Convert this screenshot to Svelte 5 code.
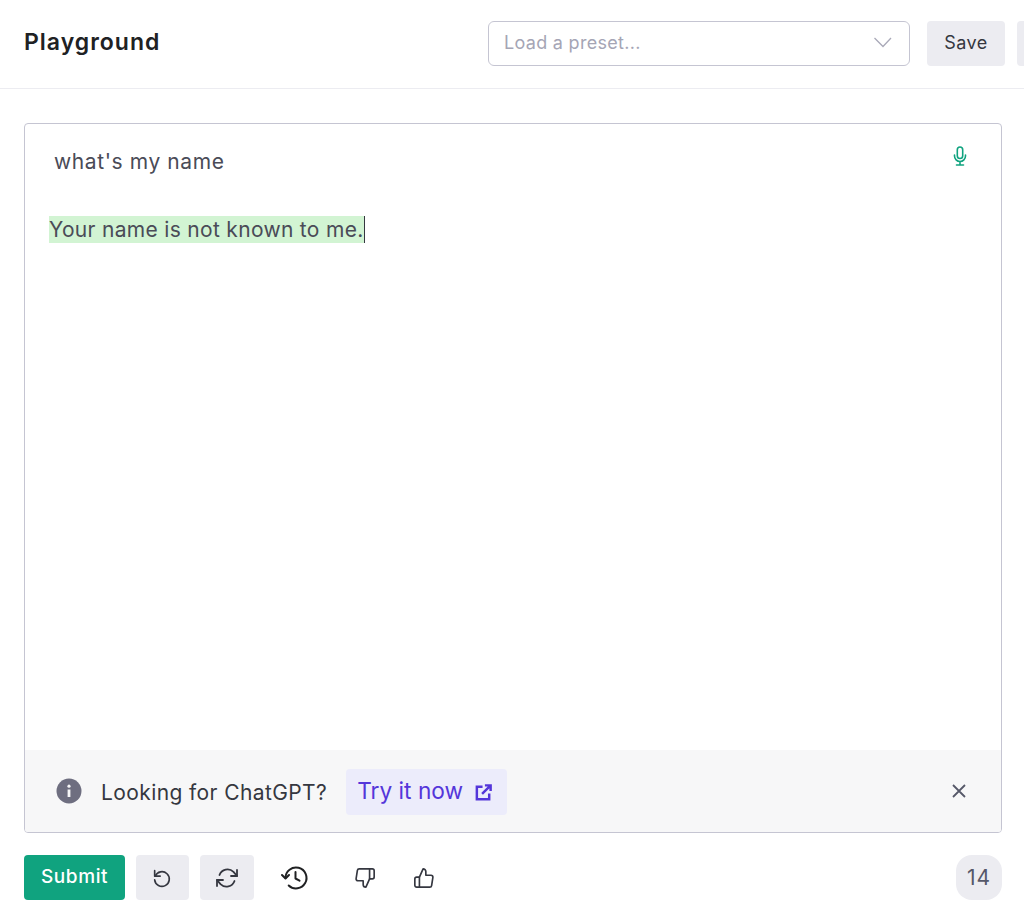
<script>
  let prompt = "what's my name";
  let answer = 'Your name is not known to me.';
  let tokens = 14;
</script>

<div class="page">
  <header class="header">
    <h1>Playground</h1>
    <div class="actions">
      <div class="preset">
        <span>Load a preset...</span>
        <svg width="20" height="20" viewBox="0 0 20 20" fill="none" stroke="#a9a9b8" stroke-width="1.3"><path d="M1.5 6l8.500 8.500L18 6" /></svg>
      </div>
      <button class="btn save">Save</button>
      <button class="btn extra" aria-label="More"></button>
    </div>
  </header>

  <main class="main">
    <section class="editor">
      <div class="text">
        <p class="prompt">{prompt}</p>
        <p class="answer"><mark>{answer}</mark><span class="caret"></span></p>
        <svg class="mic" width="24" height="24" viewBox="0 0 24 24" fill="none" stroke="#10a37f" stroke-width="1.6" stroke-linecap="round"><rect x="9.300" y="3" width="5.400" height="11.500" rx="2.700" /><path d="M6.500 11v1a5.500 5.500 0 0 0 11 0v-1M12 17.500V21M8.500 21h7" /></svg>
      </div>
      <div class="banner">
        <svg class="info" width="26" height="26" viewBox="0 0 26 26"><circle cx="13" cy="13" r="12.500" fill="#6e6e80" /><circle cx="13" cy="8.200" r="1.600" fill="#f7f7f8" /><rect x="11.600" y="11.500" width="2.800" height="7.500" fill="#f7f7f8" /></svg>
        <span class="looking">Looking for ChatGPT?</span>
        <a class="try" href="#try">
          Try it now
          <svg width="19" height="19" viewBox="0 0 20 20" fill="none" stroke="#5436da" stroke-width="2.600"><path d="M9 4H3v13h13v-6M8.500 11.500L17 3M11.500 2.500h6v6" /></svg>
        </a>
        <svg class="close" width="16" height="16" viewBox="0 0 16 16" fill="none" stroke="#565869" stroke-width="1.800"><path d="M2 2l12 12M14 2L2 14" /></svg>
      </div>
    </section>

    <footer class="toolbar">
      <button class="btn submit">Submit</button>
      <button class="btn icon undo" aria-label="Undo">
        <svg width="22" height="22" viewBox="0 0 24 24" fill="none" stroke="#353740" stroke-width="1.800" stroke-linecap="round" stroke-linejoin="round"><path d="M4 4v6h6" /><path d="M4.600 10A8 8 0 1 1 4 14" /></svg>
      </button>
      <button class="btn icon wide" aria-label="Regenerate">
        <svg width="24" height="24" viewBox="0 0 24 24" fill="none" stroke="#353740" stroke-width="1.800" stroke-linecap="round" stroke-linejoin="round"><path d="M22 4v6h-6M2 20v-6h6" /><path d="M4.500 9a8.500 8.500 0 0 1 14-3.200L22 10M2 14l3.500 4.200A8.500 8.500 0 0 0 19.500 15" /></svg>
      </button>
      <button class="plain history" aria-label="History">
        <svg width="28" height="28" viewBox="0 0 28 28" fill="none" stroke="#202123" stroke-width="2" stroke-linecap="round" stroke-linejoin="round"><path d="M4.500 14a10.500 10.500 0 1 1 3.200 7.500" /><path d="M1 11l3.500 3.500L8 11" /><path d="M14.500 8v6.500l4 2.200" /></svg>
      </button>
      <button class="plain down" aria-label="Thumbs down">
        <svg width="22" height="22" viewBox="0 0 24 24" fill="none" stroke="#353740" stroke-width="1.800" stroke-linecap="round" stroke-linejoin="round"><path d="M10 15v4a3 3 0 0 0 3 3l4-9V2H5.700a2 2 0 0 0-2 1.700L2.300 12.700a2 2 0 0 0 2 2.300H10z" /><path d="M17 2h3a2 2 0 0 1 2 2v7a2 2 0 0 1-2 2h-3" /></svg>
      </button>
      <button class="plain up" aria-label="Thumbs up">
        <svg width="22" height="22" viewBox="0 0 24 24" fill="none" stroke="#353740" stroke-width="1.800" stroke-linecap="round" stroke-linejoin="round"><path d="M14 9V5a3 3 0 0 0-3-3l-4 9v11h11.300a2 2 0 0 0 2-1.700l1.400-9a2 2 0 0 0-2-2.300H14z" /><path d="M7 22H4a2 2 0 0 1-2-2v-7a2 2 0 0 1 2-2h3" /></svg>
      </button>
      <span class="count">{tokens}</span>
    </footer>
  </main>
</div>

<style>
  :global(body) {
    margin: 0;
    background: #fff;
    overflow: hidden;
  }

  .page {
    width: 1024px;
    height: 919px;
    overflow: hidden;
    font-family: Inter, "Noto Sans", sans-serif;
    color: #353740;
  }

  .header {
    display: flex;
    align-items: center;
    justify-content: space-between;
    box-sizing: border-box;
    height: 89px;
    padding-left: 24px;
    padding-bottom: 2px;
    border-bottom: 1px solid #ececf1;
  }

  h1 {
    margin: 0 0 2px;
    font-size: 23px;
    font-weight: 600;
    letter-spacing: 1px;
    color: #202123;
  }

  .actions {
    display: flex;
    flex: none;
    width: 536px;
    gap: 12px;
    overflow: hidden;
  }

  .preset {
    display: flex;
    flex: none;
    align-items: center;
    justify-content: space-between;
    box-sizing: border-box;
    width: 422px;
    height: 45px;
    padding: 0 16px 2px 15px;
    border: 1px solid #c5c5d2;
    border-radius: 6px;
    font-size: 18px;
    letter-spacing: 0.3px;
    color: #a5a5b5;
  }

  .btn {
    border: none;
    border-radius: 4px;
    background: #ececf1;
    color: #353740;
    font-family: inherit;
    font-size: 18px;
    padding: 0;
  }

  .save {
    flex: none;
    width: 78px;
    height: 45px;
    margin-left: 5px;
    padding-bottom: 2px;
    letter-spacing: 0.5px;
  }

  .extra {
    flex: none;
    width: 40px;
    height: 45px;
  }

  .main {
    padding: 34px 22px 0 24px;
  }

  .editor {
    display: flex;
    flex-direction: column;
    box-sizing: border-box;
    height: 710px;
    border: 1px solid #c5c5d2;
    border-radius: 4px;
    overflow: hidden;
  }

  .text {
    position: relative;
    flex: 1;
    padding: 24px 24px 0;
    font-size: 21px;
    line-height: 27px;
    color: #4a4b57;
  }

  .prompt {
    margin: 0 0 41px 5px;
    letter-spacing: 0.6px;
  }

  .answer {
    display: flex;
    margin: 0;
    letter-spacing: 0.31px;
  }

  mark {
    background: #d2f4d3;
    color: inherit;
    padding: 0;
  }

  .caret {
    width: 1px;
    height: 27px;
    background: #353740;
  }

  .mic {
    position: absolute;
    top: 20px;
    right: 29px;
  }

  .banner {
    display: flex;
    align-items: center;
    box-sizing: border-box;
    height: 82px;
    padding: 2px 34px 0 31px;
    background: #f7f7f8;
  }

  .info {
    margin-top: -2px;
  }

  .looking {
    margin-left: 19px;
    font-size: 21px;
    letter-spacing: 0.4px;
    color: #353740;
  }

  .try {
    display: flex;
    align-items: center;
    gap: 11px;
    box-sizing: border-box;
    height: 46px;
    margin-left: 19px;
    padding: 0 14px 3px 11px;
    border-radius: 4px;
    background: #ececfb;
    color: #5436da;
    font-size: 22.7px;
    text-decoration: none;
  }

  .try svg {
    margin-top: 3px;
  }

  .close {
    margin-left: auto;
    margin-top: -2px;
  }

  .toolbar {
    display: flex;
    align-items: center;
    margin-top: 22px;
    height: 45px;
  }

  .submit {
    width: 101px;
    height: 45px;
    padding-bottom: 2px;
    background: #10a37f;
    color: #fff;
    font-size: 19px;
    font-weight: 500;
    letter-spacing: 0.6px;
  }

  .icon {
    display: flex;
    align-items: center;
    justify-content: center;
    width: 53px;
    height: 45px;
    margin-left: 11px;
  }

  .undo {
    padding-right: 2px;
  }

  .wide {
    width: 54px;
  }

  .plain {
    display: flex;
    align-items: center;
    justify-content: center;
    border: none;
    background: none;
    padding: 0;
  }

  .history {
    width: 28px;
    margin-left: 27px;
  }

  .down {
    width: 22px;
    margin-left: 45px;
  }

  .up {
    width: 22px;
    margin-left: 37px;
  }

  .count {
    display: flex;
    align-items: center;
    justify-content: center;
    width: 46px;
    height: 45px;
    margin-left: auto;
    border-radius: 16px;
    background: #ececf1;
    font-size: 21px;
    letter-spacing: 1px;
    color: #565869;
  }
</style>
